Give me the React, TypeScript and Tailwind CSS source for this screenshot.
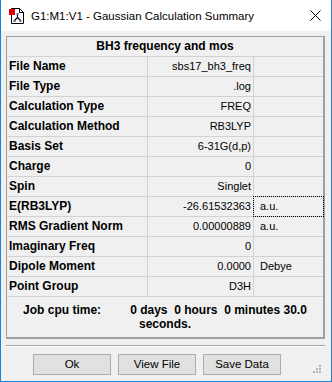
const rows = [
  { label: "File Name", value: "sbs17_bh3_freq", unit: "" },
  { label: "File Type", value: ".log", unit: "" },
  { label: "Calculation Type", value: "FREQ", unit: "" },
  { label: "Calculation Method", value: "RB3LYP", unit: "" },
  { label: "Basis Set", value: "6-31G(d,p)", unit: "" },
  { label: "Charge", value: "0", unit: "" },
  { label: "Spin", value: "Singlet", unit: "" },
  { label: "E(RB3LYP)", value: "-26.61532363", unit: "a.u.", focus: true },
  { label: "RMS Gradient Norm", value: "0.00000889", unit: "a.u." },
  { label: "Imaginary Freq", value: "0", unit: "" },
  { label: "Dipole Moment", value: "0.0000", unit: "Debye" },
  { label: "Point Group", value: "D3H", unit: "" },
];

const AppIcon = () => (
  <svg width="16" height="18" viewBox="0 0 16 18" className="block">
    <path d="M2.5 1.5 H10.5 L14.5 5.5 V16.5 H2.5 Z" fill="#fff" stroke="#000" />
    <path d="M10.5 1.5 V5.5 H14.5" fill="none" stroke="#000" />
    <rect x="0" y="2" width="6" height="6" fill="#e00000" />
    <path d="M8.5 7 V10.5 M8.5 10.5 L5.5 13.5 M8.5 10.5 L11.5 13.5" stroke="#000" strokeWidth="1.2" fill="none" />
    <rect x="7.5" y="6" width="2" height="2" fill="#666" />
    <rect x="4.5" y="13" width="2" height="2" fill="#666" />
    <rect x="10.5" y="13" width="2" height="2" fill="#666" />
  </svg>
);

const SizeGrip = () => (
  <svg width="8" height="8" viewBox="0 0 8 8" className="absolute right-[10px] bottom-[8px]">
    <rect x="6" y="0" width="2" height="2" fill="#b4b4b4" />
    <rect x="3" y="3" width="2" height="2" fill="#b4b4b4" />
    <rect x="6" y="3" width="2" height="2" fill="#b4b4b4" />
    <rect x="0" y="6" width="2" height="2" fill="#b4b4b4" />
    <rect x="3" y="6" width="2" height="2" fill="#b4b4b4" />
    <rect x="6" y="6" width="2" height="2" fill="#b4b4b4" />
  </svg>
);

const Button = (props: { title: string }) => (
  <button className="w-[78px] h-[21px] bg-[#e1e1e1] border border-[#adadad] text-[11.5px] leading-[19px] text-black">
    {props.title}
  </button>
);

export default function App() {
  return (
    <div
      className="relative w-[332px] h-[382px] flex flex-col bg-[#f0f0f0] border-x border-b border-[#1883d7] text-black"
      style={{ fontFamily: '"Liberation Sans", Arial, sans-serif' }}
    >
      {/* title bar */}
      <div className="h-[31px] bg-white flex items-center shrink-0">
        <div className="ml-[8px] mt-[1px]">
          <AppIcon />
        </div>
        <div className="ml-[6px] text-[11.5px] leading-[14px] mt-[1px]">G1:M1:V1 - Gaussian Calculation Summary</div>
        <svg width="11" height="11" viewBox="0 0 11 11" className="ml-auto mr-[10px]">
          <path d="M0.5 0.5 L10.5 10.5 M10.5 0.5 L0.5 10.5" stroke="#000" strokeWidth="1" />
        </svg>
      </div>

      <div className="pl-[5px] pt-[5px]">
        {/* summary table */}
        <div className="w-[319px] border-t border-l border-r-2 border-b-2 border-[#a0a0a0]">
          <div className="h-[20px] border-b border-[#d2d2d2] flex items-center justify-center font-bold text-[12px] leading-[19px]">
            BH3 frequency and mos
          </div>
          {rows.map((r) => (
            <div key={r.label} className="h-[20px] flex border-b border-[#d2d2d2]">
              <div className="w-[141px] border-r border-[#d2d2d2] pl-[2px] font-bold text-[12px] leading-[19px] whitespace-nowrap">
                {r.label}
              </div>
              <div className="w-[106px] border-r border-[#d2d2d2] pr-[2px] text-right text-[11px] leading-[19px] whitespace-nowrap">
                {r.value}
              </div>
              <div
                className={
                  r.focus
                    ? "flex-1 pl-[6px] text-[11px] leading-[19px] outline-1 outline-dotted outline-black"
                    : "flex-1 pl-[6px] text-[11px] leading-[19px]"
                }
              >
                {r.unit}
              </div>
            </div>
          ))}
          <div className="h-[40px] pt-[6px] font-bold text-[12px] leading-[14px] text-center">
            <div className="flex justify-center whitespace-pre">
              <span>Job cpu time:</span>
              <span className="ml-[29px]">0 days  0 hours  0 minutes 30.0</span>
            </div>
            <div>seconds.</div>
          </div>
        </div>

        {/* separator */}
        <div className="mt-[6px] w-[319px] h-[2px] border-t border-[#a0a0a0] border-b border-b-white" />

        {/* buttons */}
        <div className="mt-[7px] ml-[27px] flex gap-[7px]">
          <Button title="Ok" />
          <Button title="View File" />
          <Button title="Save Data" />
        </div>
      </div>

      <SizeGrip />
    </div>
  );
}
